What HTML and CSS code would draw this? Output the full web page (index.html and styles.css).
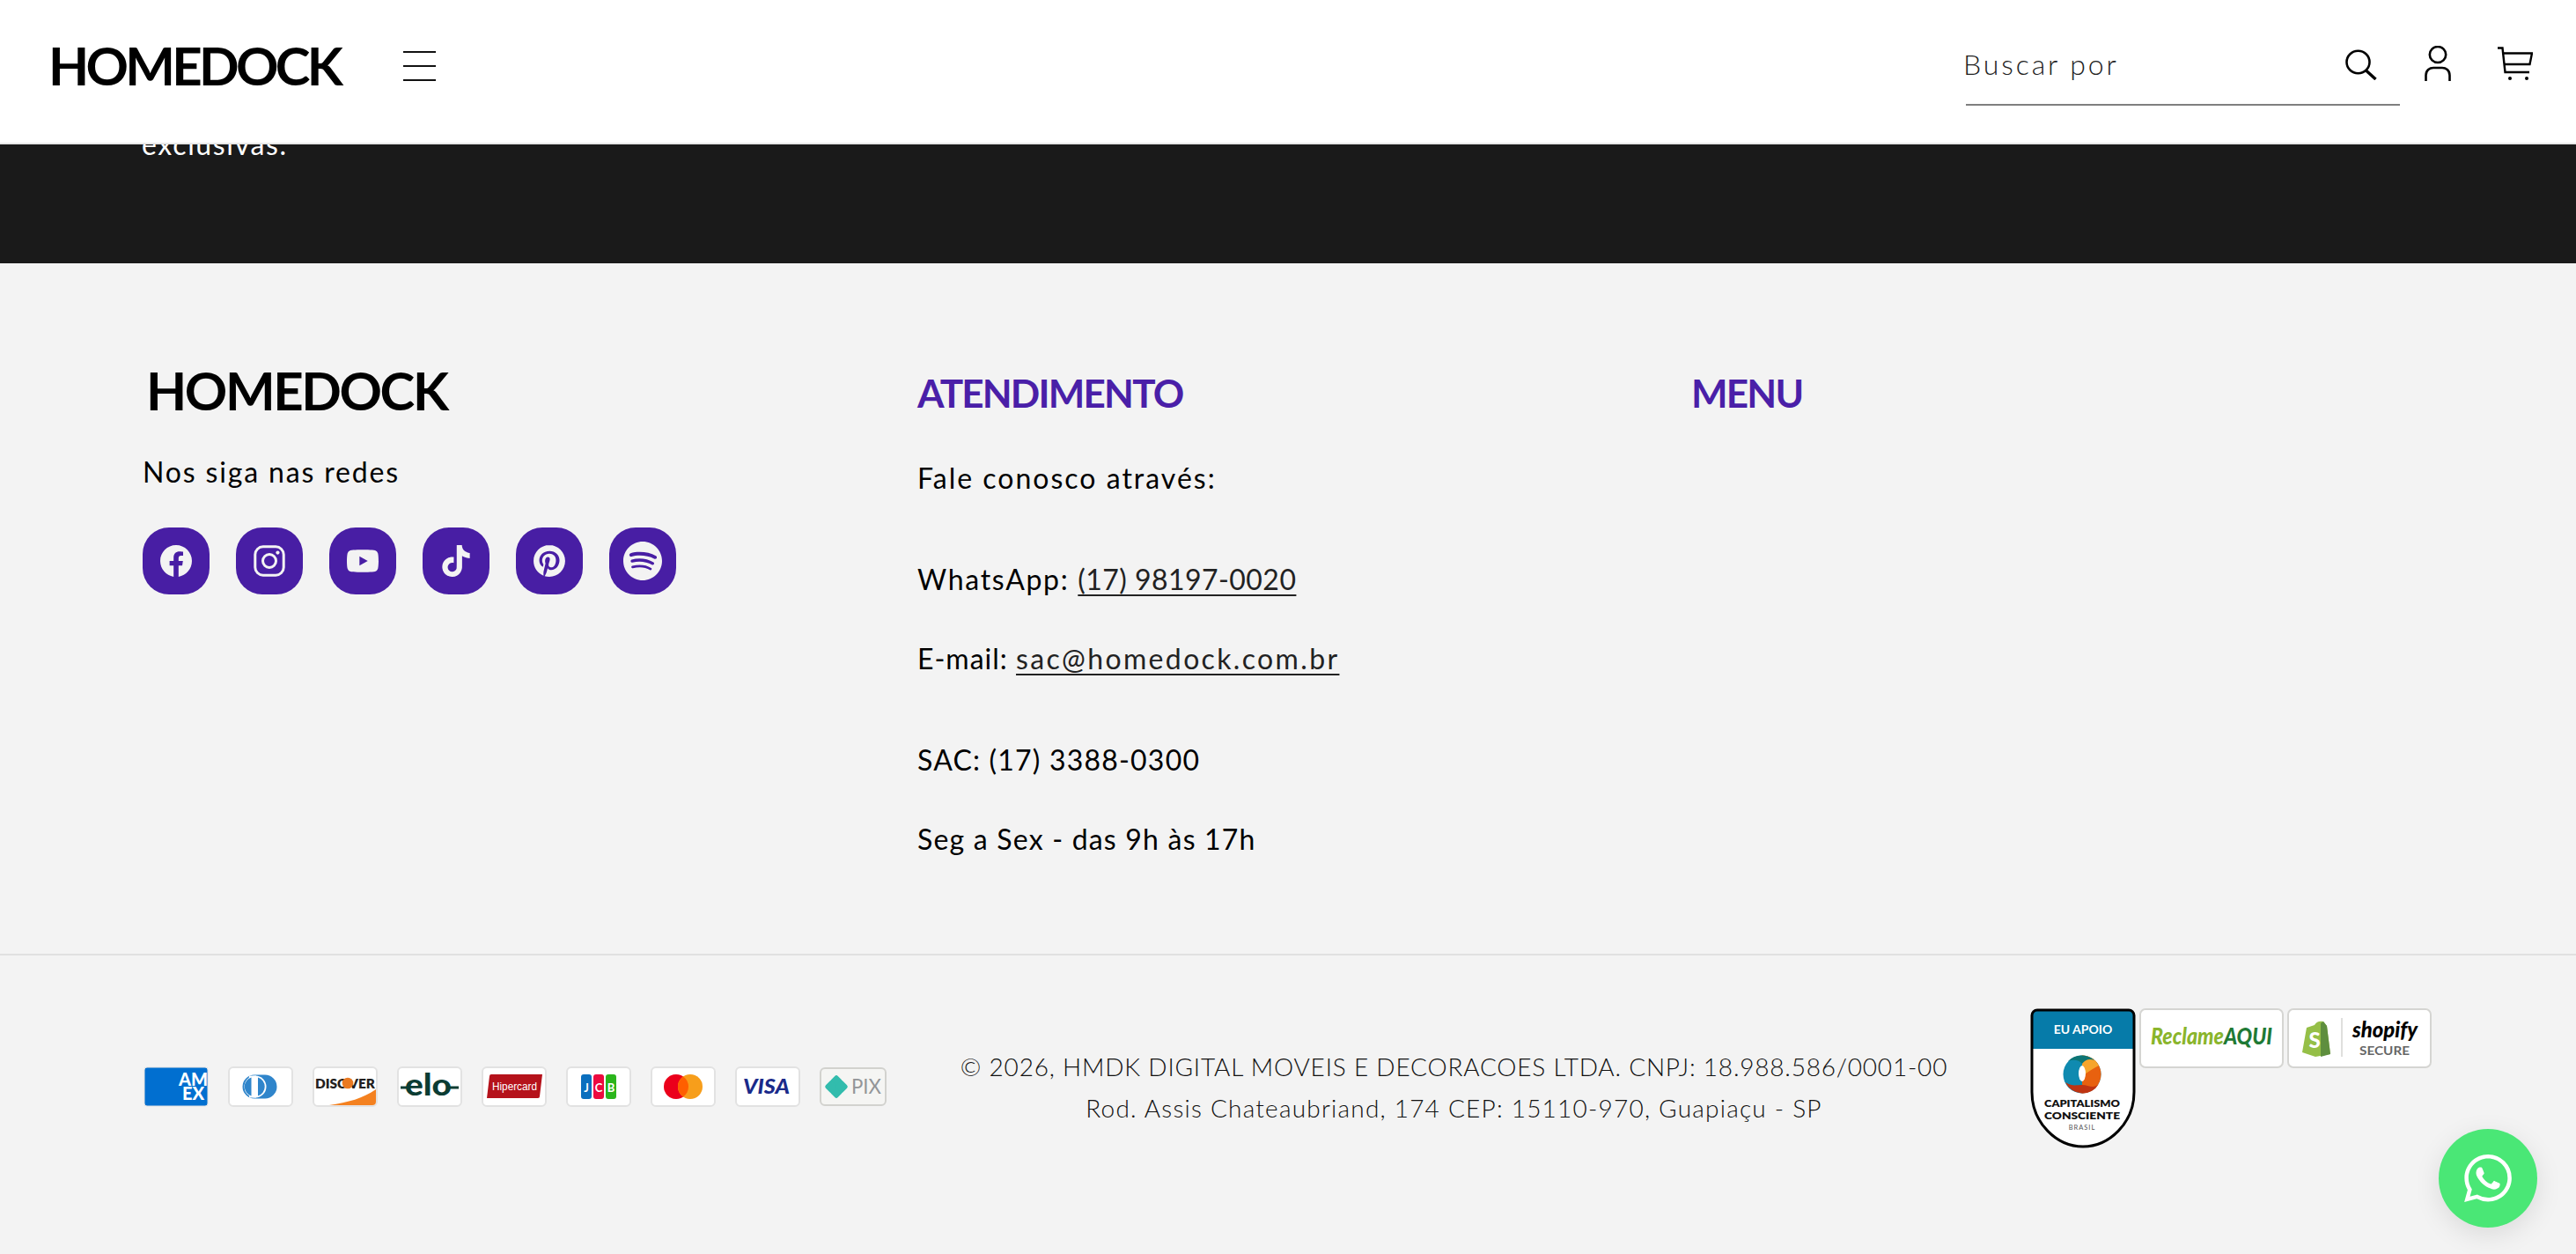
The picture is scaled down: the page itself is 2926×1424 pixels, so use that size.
FILE: index.html
```html
<!DOCTYPE html>
<html lang="pt-BR">
<head>
<meta charset="utf-8">
<title>Homedock</title>
<link rel="stylesheet" href="styles.css">
</head>
<body>
<header class="site-header">
  <a class="logo logo-header">HOMEDOCK</a>
  <button class="burger" aria-label="Menu"><span></span><span></span><span></span></button>
  <div class="header-right">
    <div class="search">
      <span class="search-text">Buscar por</span>
      <svg class="icon-search" width="36" height="35" viewBox="0 0 36 35" fill="none" stroke="#000" stroke-width="2.6"><ellipse cx="14.5" cy="14.5" rx="13" ry="12.8"/><path d="M23.5 24 34.5 34" stroke-width="3.4"/></svg>
    </div>
    <svg class="icon-user" width="30" height="40" viewBox="0 0 30 40" fill="none" stroke="#000" stroke-width="2.6"><ellipse cx="15" cy="10" rx="9.2" ry="9"/><path d="M1.5 40V33.500C1.500 27.500 6 25 10 25H20C24 25 28.500 27.500 28.500 33.500V40"/></svg>
    <svg class="icon-cart" width="40" height="38" viewBox="0 0 40 38" fill="none" stroke="#000" stroke-width="2.4"><path d="M0 1.500H5.500L8.500 29H36"/><path d="M5.500 7.500H39L36.500 20H7"/><circle cx="14" cy="36" r="2" fill="#000" stroke="none"/><circle cx="33" cy="36" r="2" fill="#000" stroke="none"/></svg>
  </div>
</header>

<section class="band"><p>exclusivas.</p></section>

<footer class="footer">
  <div class="footer-main">
    <div class="col">
      <a class="logo logo-footer">HOMEDOCK</a>
      <p class="follow">Nos siga nas redes</p>
      <ul class="socials">
        <li><svg viewBox="0 0 24 24"><path d="M24 12.073c0-6.627-5.373-12-12-12s-12 5.373-12 12c0 5.990 4.388 10.954 10.125 11.854v-8.385H7.078v-3.470h3.047V9.430c0-3.007 1.792-4.669 4.533-4.669 1.312 0 2.686.235 2.686.235v2.953H15.830c-1.491 0-1.956.925-1.956 1.874v2.250h3.328l-.532 3.470h-2.796v8.385C19.612 23.027 24 18.062 24 12.073z"/></svg></li>
        <li><svg viewBox="0 0 24 24" class="ig"><rect x="1.200" y="1.200" width="21.600" height="21.600" rx="6"/><circle cx="12" cy="12" r="5"/><circle class="dot" cx="18.300" cy="5.700" r="1.400"/></svg></li>
        <li><svg viewBox="0 0 24 24"><path d="M23.498 6.186a3.016 3.016 0 0 0-2.122-2.136C19.505 3.545 12 3.545 12 3.545s-7.505 0-9.377.505A3.017 3.017 0 0 0 .502 6.186C0 8.070 0 12 0 12s0 3.930.502 5.814a3.016 3.016 0 0 0 2.122 2.136c1.871.505 9.376.505 9.376.505s7.505 0 9.377-.505a3.015 3.015 0 0 0 2.122-2.136C24 15.930 24 12 24 12s0-3.930-.502-5.814zM9.545 15.568V8.432L15.818 12l-6.273 3.568z"/></svg></li>
        <li><svg viewBox="0 0 24 24"><path d="M12.525.02c1.310-.02 2.610-.01 3.910-.02.08 1.530.63 3.090 1.750 4.170 1.120 1.110 2.700 1.620 4.240 1.790v4.030c-1.440-.05-2.890-.35-4.200-.97-.57-.26-1.100-.59-1.620-.93-.01 2.920.01 5.840-.02 8.750-.08 1.400-.54 2.790-1.350 3.940-1.310 1.920-3.580 3.170-5.910 3.210-1.430.08-2.860-.31-4.080-1.030-2.020-1.190-3.440-3.370-3.650-5.710-.02-.5-.03-1-.01-1.490.18-1.900 1.120-3.720 2.580-4.960 1.660-1.440 3.980-2.130 6.150-1.720.02 1.480-.04 2.960-.04 4.440-.99-.32-2.150-.23-3.020.37-.63.41-1.110 1.040-1.360 1.750-.21.51-.15 1.070-.14 1.610.24 1.640 1.820 3.020 3.500 2.870 1.120-.01 2.190-.66 2.770-1.610.19-.33.4-.67.41-1.060.1-1.790.06-3.570.07-5.360.01-4.030-.01-8.050.02-12.070z"/></svg></li>
        <li><svg viewBox="0 0 24 24"><path d="M12.017 0C5.396 0 .029 5.367.029 11.987c0 5.079 3.158 9.417 7.618 11.162-.105-.949-.199-2.403.041-3.439.219-.937 1.406-5.957 1.406-5.957s-.359-.72-.359-1.781c0-1.663.967-2.911 2.168-2.911 1.024 0 1.518.769 1.518 1.688 0 1.029-.653 2.567-.992 3.992-.285 1.193.6 2.165 1.775 2.165 2.128 0 3.768-2.245 3.768-5.487 0-2.861-2.063-4.869-5.008-4.869-3.410 0-5.409 2.562-5.409 5.199 0 1.033.394 2.143.889 2.741.099.12.112.225.085.345-.09.375-.293 1.199-.334 1.363-.053.225-.172.271-.401.165-1.495-.69-2.433-2.878-2.433-4.646 0-3.776 2.748-7.252 7.920-7.252 4.158 0 7.392 2.967 7.392 6.923 0 4.135-2.607 7.462-6.233 7.462-1.214 0-2.354-.629-2.758-1.379l-.749 2.848c-.269 1.045-1.004 2.352-1.498 3.146 1.123.345 2.306.535 3.550.535 6.607 0 11.985-5.365 11.985-11.987C23.970 5.390 18.592.026 11.985.026L12.017 0z"/></svg></li>
        <li><svg class="lg" viewBox="0 0 24 24"><path d="M12 0C5.400 0 0 5.400 0 12s5.400 12 12 12 12-5.400 12-12S18.660 0 12 0zm5.521 17.340c-.24.359-.66.48-1.021.24-2.820-1.740-6.360-2.101-10.561-1.141-.418.122-.779-.179-.899-.539-.12-.421.18-.78.54-.9 4.560-1.021 8.520-.6 11.640 1.320.42.18.479.659.301 1.020zm1.440-3.300c-.301.42-.841.6-1.262.3-3.239-1.980-8.159-2.580-11.939-1.380-.479.12-1.020-.12-1.140-.6-.12-.48.12-1.021.6-1.141C9.600 9.900 15 10.561 18.720 12.840c.361.181.54.78.241 1.200zm.12-3.360C15.240 8.400 8.820 8.160 5.160 9.301c-.6.179-1.200-.181-1.380-.721-.18-.601.18-1.200.72-1.381 4.260-1.260 11.280-1.020 15.721 1.621.539.3.719 1.020.419 1.560-.299.421-1.020.599-1.559.3z"/></svg></li>
      </ul>
    </div>
    <div class="col col-text">
      <h3>ATENDIMENTO</h3>
      <p class="wide">Fale conosco através:</p>
      <div class="group">
        <p><span class="label">WhatsApp: </span><a class="link num">(17) 98197-0020</a></p>
        <p><span class="label-short">E-mail: </span><a class="link wider">sac@homedock.com.br</a></p>
      </div>
      <div class="group">
        <p class="tight">SAC: (17) 3388-0300</p>
        <p class="tight">Seg a Sex - das 9h às 17h</p>
      </div>
    </div>
    <div class="col col-text">
      <h3>MENU</h3>
    </div>
  </div>

  <div class="footer-bottom">
    <ul class="pay">
      <li><svg width="74" height="46" viewBox="0 0 74 46"><rect x="1" y="1" width="72" height="44" rx="3" fill="#016fd0" stroke="#e2e2e2"/><text x="40" y="22" class="t-amex">AM</text><text x="44" y="38" class="t-amex">EX</text></svg></li>
      <li><svg width="74" height="46" viewBox="0 0 74 46"><rect x="1" y="1" width="72" height="44" rx="5" fill="#fff" stroke="#e2e2e2" stroke-width="2"/><path d="M30 9.500H42a13.500 13.500 0 0 1 0 27H30a13.500 13.500 0 0 1 0-27z" fill="#2f85cb"/><path d="M24 10.500H32V35.500H24z" fill="#fff"/><circle cx="31" cy="23" r="12.500" fill="#fff"/><path d="M26.500 12.500a11 11 0 0 0 0 21zM34 12.500a11 11 0 0 1 0 21z" fill="#2f85cb"/></svg></li>
      <li><svg width="74" height="46" viewBox="0 0 74 46"><rect x="1" y="1" width="72" height="44" rx="5" fill="#fff" stroke="#e2e2e2" stroke-width="2"/><path d="M19 44C40 41 58 36 72 26V40a4 4 0 0 1-4 4z" fill="#f48120"/><text x="3" y="24.500" textLength="68" lengthAdjust="spacingAndGlyphs" class="t-disc">DISC&#160;VER</text><circle cx="40" cy="19" r="6.300" fill="#ea7a22"/></svg></li>
      <li><svg width="74" height="46" viewBox="0 0 74 46"><rect x="1" y="1" width="72" height="44" rx="5" fill="#fff" stroke="#e2e2e2" stroke-width="2"/><path d="M4 24H12M60 24H70" stroke="#0b3c33" stroke-width="3"/><text x="9" y="33" textLength="53" lengthAdjust="spacingAndGlyphs" class="t-elo">elo</text></svg></li>
      <li><svg width="74" height="46" viewBox="0 0 74 46"><rect x="1" y="1" width="72" height="44" rx="5" fill="#fff" stroke="#e2e2e2" stroke-width="2"/><path d="M9 11a2 2 0 0 1 2-2H69L66 34a2 2 0 0 1-2 2H6z" fill="#b5121b"/><text x="12" y="27" textLength="51" lengthAdjust="spacingAndGlyphs" class="t-hip">Hipercard</text></svg></li>
      <li><svg width="74" height="46" viewBox="0 0 74 46"><rect x="1" y="1" width="72" height="44" rx="5" fill="#fff" stroke="#e2e2e2" stroke-width="2"/><rect x="17" y="9" width="12" height="28" rx="3" fill="#0b6fbe"/><rect x="31" y="9" width="12" height="28" rx="3" fill="#ed0a3f"/><rect x="45" y="9" width="12" height="28" rx="3" fill="#2bb51c"/><text x="23" y="29" class="t-jcb">J</text><text x="37" y="29" class="t-jcb">C</text><text x="51" y="29" class="t-jcb">B</text></svg></li>
      <li><svg width="74" height="46" viewBox="0 0 74 46"><rect x="1" y="1" width="72" height="44" rx="5" fill="#fff" stroke="#e2e2e2" stroke-width="2"/><circle cx="29" cy="23" r="14" fill="#eb001b"/><circle cx="45" cy="23" r="14" fill="#f79e1b"/><path d="M37 11.500a14 14 0 0 1 0 23a14 14 0 0 1 0-23z" fill="#ff5f00"/></svg></li>
      <li><svg width="74" height="46" viewBox="0 0 74 46"><rect x="1" y="1" width="72" height="44" rx="5" fill="#fff" stroke="#e2e2e2" stroke-width="2"/><text x="9" y="31" textLength="53" lengthAdjust="spacingAndGlyphs" class="t-visa">VISA</text></svg></li>
      <li class="pay-pix"><svg width="76" height="44" viewBox="0 0 76 44"><rect x="1" y="1" width="74" height="42" rx="5" fill="#f5f5f3" stroke="#d2d2ce" stroke-width="2"/><g fill="#32bcad"><rect x="13.500" y="10.500" width="11" height="11" rx="2.500" transform="rotate(45 19 16)"/><rect x="13.500" y="22.500" width="11" height="11" rx="2.500" transform="rotate(45 19 28)"/><rect x="7.500" y="16.500" width="11" height="11" rx="2.500" transform="rotate(45 13 22)"/><rect x="19.500" y="16.500" width="11" height="11" rx="2.500" transform="rotate(45 25 22)"/></g><text x="36" y="30" textLength="34" lengthAdjust="spacingAndGlyphs" class="t-pix">PIX</text></svg></li>
    </ul>
    <div class="legal">
      <p>© 2026, HMDK DIGITAL MOVEIS E DECORACOES LTDA. CNPJ: 18.988.586/0001-00</p>
      <p class="legal-addr">Rod. Assis Chateaubriand, 174 CEP: 15110-970, Guapiaçu - SP</p>
    </div>
    <div class="seals">
      <svg width="120" height="159" viewBox="0 0 120 159">
        <defs><clipPath id="shield"><path d="M8 2H112a6 6 0 0 1 6 6V95C118 130 90 157 60 157C30 157 2 130 2 95V8a6 6 0 0 1 6-6Z"/></clipPath></defs>
        <g clip-path="url(#shield)">
          <rect width="120" height="159" fill="#fff"/>
          <rect width="120" height="46" fill="#067ba9"/>
        </g>
        <path d="M8 2H112a6 6 0 0 1 6 6V95C118 130 90 157 60 157C30 157 2 130 2 95V8a6 6 0 0 1 6-6Z" fill="none" stroke="#000" stroke-width="3"/>
        <text x="60" y="29" class="t-eu">EU APOIO</text>
        <circle cx="59" cy="75" r="21.500" fill="#0f8ab0"/>
        <path d="M59 53.500a21.500 21.500 0 0 1 21.500 21.500a21.500 21.500 0 0 1-21.500 21.500z" fill="#e8610f"/>
        <path d="M59 53.500a21.500 21.500 0 0 1 19 11.500c-6 3-12 7-19 12z" fill="#f6a52c"/>
        <path d="M40 84a21.500 21.500 0 0 0 38 2c-6 6-12 1-19 1s-11 2-19-3z" fill="#bf3412"/>
        <path d="M43 60a21.500 21.500 0 0 1 30-1c-6-2-10-1-14 4c-4-5-10-5-16-3z" fill="#0d7575"/>
        <ellipse cx="59" cy="74" rx="4" ry="9" fill="#fff"/>
        <text x="59" y="112" textLength="86" lengthAdjust="spacingAndGlyphs" class="t-cap">CAPITALISMO</text>
        <text x="59" y="126" textLength="86" lengthAdjust="spacingAndGlyphs" class="t-cap">CONSCIENTE</text>
        <text x="59" y="138" class="t-bra">BRASIL</text>
      </svg>
      <svg width="164" height="68" viewBox="0 0 164 68"><rect x="1" y="1" width="162" height="66" rx="6" fill="#fff" stroke="#d5d5d2" stroke-width="2"/><text x="13" y="41" textLength="138" lengthAdjust="spacingAndGlyphs" class="t-rec">Reclame<tspan class="t-aqui">AQUI</tspan></text></svg>
      <svg width="164" height="68" viewBox="0 0 164 68"><rect x="1" y="1" width="162" height="66" rx="6" fill="#fff" stroke="#d5d5d2" stroke-width="2"/><path d="M17 50 22 22 31 19C33 15 37 14 41 15L45 20 49 52 32 55z" fill="#95bf47"/><path d="M38 17 41 15 45 20 49 52 38 55z" fill="#5e8e3e"/><text x="31" y="45" class="t-sbag">S</text><path d="M62 11V55" stroke="#d5d5d2" stroke-width="1.500"/><text x="74" y="33" textLength="74" lengthAdjust="spacingAndGlyphs" class="t-shop">shopify</text><text x="82" y="53" textLength="57" lengthAdjust="spacingAndGlyphs" class="t-sec">SECURE</text></svg>
    </div>
  </div>
</footer>

<a class="wa" aria-label="WhatsApp"><svg viewBox="0 0 24 24"><path d="M17.472 14.382c-.297-.149-1.758-.867-2.030-.967-.273-.099-.471-.148-.67.15-.197.297-.767.966-.94 1.164-.173.199-.347.223-.644.075-.297-.15-1.255-.463-2.390-1.475-.883-.788-1.480-1.761-1.653-2.059-.173-.297-.018-.458.13-.606.134-.133.298-.347.446-.52.149-.174.198-.298.298-.497.099-.198.05-.371-.025-.52-.075-.149-.669-1.612-.916-2.207-.242-.579-.487-.5-.669-.51-.173-.008-.371-.01-.57-.01-.198 0-.52.074-.792.372-.272.297-1.040 1.016-1.040 2.479 0 1.462 1.065 2.875 1.213 3.074.149.198 2.096 3.200 5.077 4.487.709.306 1.262.489 1.694.625.712.227 1.360.195 1.871.118.571-.085 1.758-.719 2.006-1.413.248-.694.248-1.289.173-1.413-.074-.124-.272-.198-.57-.347m-5.421 7.403h-.004a9.870 9.870 0 0 1-5.031-1.378l-.361-.214-3.741.982.998-3.648-.235-.374a9.860 9.860 0 0 1-1.510-5.260c.001-5.450 4.436-9.884 9.888-9.884 2.640 0 5.122 1.030 6.988 2.898a9.825 9.825 0 0 1 2.893 6.994c-.003 5.450-4.437 9.884-9.885 9.884m8.413-18.297A11.815 11.815 0 0 0 12.050 0C5.495 0 .16 5.335.157 11.892c0 2.096.547 4.142 1.588 5.945L.057 24l6.305-1.654a11.882 11.882 0 0 0 5.683 1.448h.005c6.554 0 11.890-5.335 11.893-11.893a11.821 11.821 0 0 0-3.480-8.413z"/></svg></a>
</body>
</html>
```

FILE: styles.css
```css
* { box-sizing: border-box; }
html, body { margin: 0; padding: 0; }
body {
  font-family: "Lato", "Liberation Sans", sans-serif;
  font-size: 32px;
  line-height: 48px;
  font-weight: 400;
  color: #000;
  background: #f3f3f3;
  height: 1424px;
  overflow: hidden;
}
p { margin: 0; }
ul { list-style: none; margin: 0; padding: 0; }
svg { display: block; }

/* header */
.site-header {
  position: fixed;
  top: 0; left: 0; right: 0;
  height: 164px;
  background: #fff;
  border-bottom: 2px solid #e8e8e8;
  display: flex;
  align-items: flex-start;
  padding: 44px 49px 0 55px;
  z-index: 5;
}
.logo {
  display: block;
  font-size: 60px;
  line-height: 60px;
  font-weight: 700;
  color: #000;
  white-space: nowrap;
}
.logo-header { letter-spacing: -3.7px; width: 403px; }
.logo-footer { letter-spacing: -2.4px; margin-left: 4px; }
.burger {
  width: 37px; height: 34px;
  margin-top: 14px;
  padding: 0; border: 0; background: none;
  display: flex; flex-direction: column; justify-content: space-between;
}
.burger span { display: block; height: 2px; background: #111; }
.header-right {
  margin-left: auto;
  display: flex;
  align-items: flex-start;
}
.search {
  position: relative;
  width: 493px;
  height: 76px;
  border-bottom: 2px solid #7f7f7f;
  padding-top: 5px;
}
.search-text { margin-left: -3px; color: #222; letter-spacing: 2.9px; font-weight: 300; }
.icon-search { position: absolute; right: 26px; top: 12px; }
.icon-user { margin: 8px 0 0 28px; }
.icon-cart { margin: 9px 0 0 53px; }

/* dark band */
.band {
  height: 299px;
  background: #1a1a1a;
  color: #fff;
  padding: 140px 0 0 161px;
  letter-spacing: 1.65px;
}

/* footer */
.footer { background: #f3f3f3; }
.footer-main {
  height: 786px;
  padding: 114px 0 0 162px;
  display: grid;
  grid-template-columns: 880px 879px 1fr;
  border-bottom: 2px solid #e0e0e0;
}
.follow { margin-top: 39px; letter-spacing: 1.85px; }
.socials { display: flex; gap: 30px; margin-top: 39px; }
.socials li {
  width: 76px; height: 76px;
  border-radius: 30px;
  background: #481ea4;
  display: flex; align-items: center; justify-content: center;
}
.socials svg { width: 36px; height: 36px; fill: #f3f3f3; }
.socials svg.lg { width: 44px; height: 44px; }
.socials .ig { fill: none; stroke: #f3f3f3; stroke-width: 2; }
.socials .ig .dot { fill: #f3f3f3; stroke: none; }

.col-text { padding-top: 11px; }
.col-text h3 {
  margin: 0 0 51px;
  font-size: 44px;
  line-height: 44px;
  font-weight: 700;
  letter-spacing: -1.8px;
  color: #4a1fa8;
}
.wide { letter-spacing: 2px; }
.label { letter-spacing: 1.7px; }
.label-short { letter-spacing: 1px; }
.wider { letter-spacing: 2.35px; }
.num { letter-spacing: .45px; }
.tight { letter-spacing: 1.2px; }
.group { margin-top: 67px; }
.group p + p { margin-top: 42px; }
.link { color: #222; text-decoration: underline; text-underline-offset: 5px; text-decoration-thickness: 2px; }

.footer-bottom {
  display: grid;
  grid-template-columns: auto 1fr auto;
  padding: 60px 164px 0 163px;
  align-items: start;
}
.pay { display: flex; gap: 22px; margin-top: 66px; }
.pay-pix { margin-top: 1px; }
.legal {
  padding: 43px 10px 0 0;
  text-align: center;
  font-size: 28px;
  line-height: 47px;
  font-weight: 300;
  color: #111;
  letter-spacing: .8px;
}
.legal-addr { letter-spacing: 1.22px; }
.seals { display: flex; align-items: flex-start; gap: 4px; }

/* text inside svg badges */
.t-amex { font: 900 20px "Lato", sans-serif; fill: #fff; }
.t-disc { font: 800 15px "Lato", sans-serif; fill: #231f20; }
.t-elo { font: 900 34px "Lato", sans-serif; fill: #0b3c33; }
.t-hip { font: 400 12px "Liberation Sans", sans-serif; fill: #fff; }
.t-jcb { font: 700 13px "Lato", sans-serif; fill: #fff; text-anchor: middle; }
.t-visa { font: italic 900 23px "Lato", sans-serif; fill: #1a2a8a; }
.t-pix { font: 400 23px "Lato", sans-serif; fill: #939598; }
.t-eu { font: 700 14px "Lato", sans-serif; fill: #fff; text-anchor: middle; }
.t-cap { font: 800 11px "Lato", sans-serif; fill: #111; text-anchor: middle; }
.t-bra { font: 400 7.500px "Lato", sans-serif; fill: #555; text-anchor: middle; letter-spacing: 1px; }
.t-rec { font: italic 900 26px "Lato", sans-serif; fill: #8ab52c; }
.t-aqui { fill: #1f7a35; }
.t-sbag { font: 900 24px "Lato", sans-serif; fill: #fff; text-anchor: middle; }
.t-shop { font: italic 900 25px "Lato", sans-serif; fill: #000; }
.t-sec { font: 700 14px "Lato", sans-serif; fill: #666; }

/* floating WhatsApp */
.wa {
  position: fixed;
  left: 2770px;
  top: 1282px;
  width: 112px; height: 112px;
  border-radius: 50%;
  background: #4ae776;
  box-shadow: 0 8px 30px rgba(0,0,0,.1);
  display: flex; align-items: center; justify-content: center;
}
.wa svg { width: 54px; height: 54px; fill: #fff; }
```
